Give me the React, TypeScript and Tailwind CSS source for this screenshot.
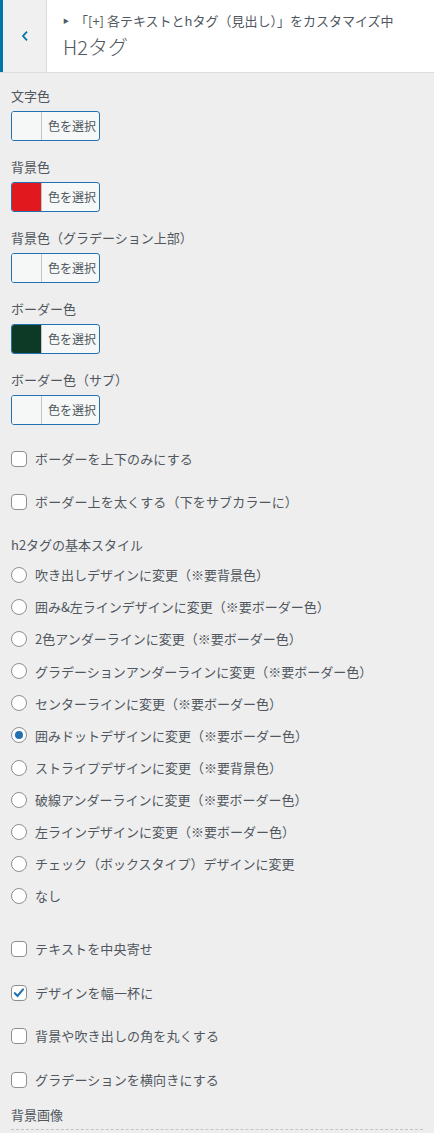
import React from "react";

const FONT = { fontFamily: '"Noto Sans CJK JP", "Noto Sans", sans-serif' };

function ColorField({ label, swatch }: { label: string; swatch: string }) {
  return (
    <div className="mb-[16px]">
      <div className="text-[13px] leading-[20px] text-[#50575e] mb-[5px]">{label}</div>
      <div className="flex h-[30px] w-[89px] overflow-hidden rounded-[3px] border border-[#2271b1] bg-[#f6f7f7]">
        <span className="w-[30px] border-r border-[#c3c4c7]" style={{ background: swatch }} />
        <span className="flex-1 text-[12px] leading-[28px] text-[#50575e] pl-[6px]">色を選択</span>
      </div>
    </div>
  );
}

function Check({ label, checked, className }: { label: string; checked?: boolean; className?: string }) {
  return (
    <div className={"flex items-center h-[20px] " + (className ?? "")}>
      <span className="flex h-[16px] w-[16px] items-center justify-center rounded-[4px] border border-[#8c8f94] bg-white">
        {checked && (
          <svg viewBox="0 0 16 16" className="h-[14px] w-[14px]">
            <path d="M3.2 8.2 L6.4 11.4 L12.6 3.8" fill="none" stroke="#2271b1" strokeWidth="2.4" strokeLinecap="round" />
          </svg>
        )}
      </span>
      <span className="ml-[8px] text-[13px] tracking-[0.15px] text-[#50575e]">{label}</span>
    </div>
  );
}

function Radio({ label, checked }: { label: string; checked?: boolean }) {
  return (
    <div className="flex items-center h-[20px] mb-[12.1px]">
      <span className="flex h-[16px] w-[16px] items-center justify-center rounded-full border border-[#8c8f94] bg-white">
        {checked && <span className="h-[8px] w-[8px] rounded-full bg-[#2271b1]" />}
      </span>
      <span className="ml-[8px] text-[13px] text-[#50575e]">{label}</span>
    </div>
  );
}

const styles = [
  "吹き出しデザインに変更（※要背景色）",
  "囲み&左ラインデザインに変更（※要ボーダー色）",
  "2色アンダーラインに変更（※要ボーダー色）",
  "グラデーションアンダーラインに変更（※要ボーダー色）",
  "センターラインに変更（※要ボーダー色）",
  "囲みドットデザインに変更（※要ボーダー色）",
  "ストライプデザインに変更（※要背景色）",
  "破線アンダーラインに変更（※要ボーダー色）",
  "左ラインデザインに変更（※要ボーダー色）",
  "チェック（ボックスタイプ）デザインに変更",
  "なし",
];

export default function App() {
  return (
    <div className="min-h-screen w-[434px] bg-[#eeeeee] overflow-hidden" style={FONT}>
      <header className="flex h-[73px] border-b border-[#dcdcde] bg-white">
        <div className="w-[3px] bg-[#0073aa]" />
        <button className="flex w-[44px] items-center justify-center border-r border-[#dcdcde] bg-[#f0f0f1]">
          <svg viewBox="0 0 10 14" className="h-[12px] w-[8px]">
            <path d="M7.5 1.5 L2.5 7 L7.5 12.5" fill="none" stroke="#0073aa" strokeWidth="2.2" />
          </svg>
        </button>
        <div className="pl-[16px] pt-[11px]">
          <div className="flex items-center text-[13px] leading-[20px] text-[#50575e]">
            <span className="text-[6px] mr-[6px]">▶</span>
            <span>「[+] 各テキストとhタグ（見出し）」をカスタマイズ中</span>
          </div>
          <div className="mt-[2px] text-[20px] leading-[28px] font-light text-[#50575e]">H2タグ</div>
        </div>
      </header>

      <main className="px-[11px] pt-[13px]">
        <ColorField label="文字色" swatch="#f6f7f7" />
        <ColorField label="背景色" swatch="#e1191e" />
        <ColorField label="背景色（グラデーション上部）" swatch="#f6f7f7" />
        <ColorField label="ボーダー色" swatch="#0c3a26" />
        <ColorField label="ボーダー色（サブ）" swatch="#f6f7f7" />

        <Check label="ボーダーを上下のみにする" className="mt-[24px]" />
        <Check label="ボーダー上を太くする（下をサブカラーに）" className="mt-[23px]" />

        <div className="mt-[23px] mb-[10px] text-[13px] leading-[20px] text-[#50575e]">h2タグの基本スタイル</div>
        {styles.map((s, i) => (
          <Radio key={i} label={s} checked={i === 5} />
        ))}

        <Check label="テキストを中央寄せ" className="mt-[33px]" />
        <Check label="デザインを幅一杯に" checked className="mt-[24px]" />
        <Check label="背景や吹き出しの角を丸くする" className="mt-[23px]" />
        <Check label="グラデーションを横向きにする" className="mt-[24px]" />

        <div className="mt-[15px] text-[13px] leading-[20px] text-[#50575e]">背景画像</div>
        <div className="mt-[4px] border-b border-dashed border-[#c3c4c7]" />
      </main>
    </div>
  );
}
